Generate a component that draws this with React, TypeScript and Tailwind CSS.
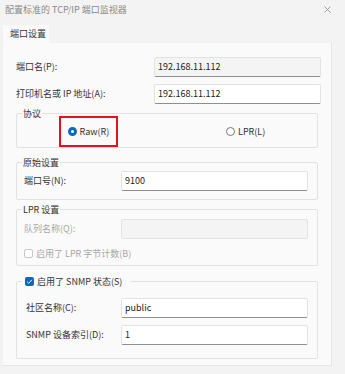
import { ReactNode } from "react";

const font = "font-['Noto_Sans_CJK_SC','Noto_Sans',sans-serif]";

// text box in Windows 11 style: light frame, darker bottom line
const Field = ({ value, w, disabled, dim }: { value: string; w: string; disabled?: boolean; dim?: boolean }) => (
  <div
    className={`${w} h-[20px] flex items-center pl-[3px] rounded-[2px] border border-[#e3e3e3] text-[9px] text-[#222] ${
      disabled ? "bg-[#f4f4f4]" : "bg-white"
    } ${dim ? "" : "border-b-[#8f8f8f]"}`}
  >
    {value}
  </div>
);

const Group = ({ legend, children, className }: { legend: ReactNode; children: ReactNode; className: string }) => (
  <div className={`relative mx-[13px] border border-[#e2e2e2] rounded-[2px] ${className}`}>
    <div className="absolute -top-[7px] left-[5px] px-[1px] bg-[#fafafa] h-[13px] flex items-center">{legend}</div>
    {children}
  </div>
);

const Check = ({ checked, disabled }: { checked?: boolean; disabled?: boolean }) =>
  checked ? (
    <span className="w-[9px] h-[9px] rounded-[2px] bg-[#0a67c2] flex items-center justify-center">
      <svg width="7" height="7" viewBox="0 0 8 8">
        <path d="M1.3 4.2 3.2 6 6.8 2" stroke="white" strokeWidth="1.1" fill="none" />
      </svg>
    </span>
  ) : (
    <span className={`w-[9px] h-[9px] rounded-[2px] border ${disabled ? "border-[#c8c8c8]" : "border-[#888]"} bg-white`} />
  );

export default function App() {
  return (
    <div className={`w-[345px] h-[374px] bg-[#f3f3f3] overflow-hidden ${font} text-[#333] text-[9px]`}>
      {/* title bar */}
      <div className="h-[19px] flex items-center justify-between pl-[5px] pr-[14px] text-[#8a8a8a]">
        <span>配置标准的 TCP/IP 端口监视器</span>
        <svg width="7" height="7" viewBox="0 0 7 7">
          <path d="M0.5 0.5 6.5 6.5 M6.5 0.5 0.5 6.5" stroke="#8a8a8a" strokeWidth="0.8" />
        </svg>
      </div>

      {/* tab */}
      <div className="mt-[6px] ml-[3px] w-[46px] h-[18px] bg-[#fafafa] flex items-center pl-[7px] text-[#333]">端口设置</div>

      {/* tab panel */}
      <div className="ml-[3px] w-[329px] h-[323px] bg-[#fafafa] border-r border-b border-[#e6e6e6] pt-[14px]">
        <div className="flex items-center pl-[13px]">
          <span className="w-[138px]">端口名(P):</span>
          <Field value="192.168.11.112" w="w-[167px]" disabled />
        </div>
        <div className="flex items-center pl-[13px] mt-[7px]">
          <span className="w-[138px]">打印机名或 IP 地址(A):</span>
          <Field value="192.168.11.112" w="w-[167px]" />
        </div>

        <Group legend={<span>协议</span>} className="mt-[9px] h-[35px]">
          <div className="flex items-start pl-[42px] pt-[2px]">
            <div className="w-[59px] h-[31px] border-2 border-[#e8101a] flex items-center justify-center gap-[3px]">
              <span className="w-[9px] h-[9px] rounded-full border-[3px] border-[#0a67c2] bg-white" />
              <span>Raw(R)</span>
            </div>
            <div className="ml-[108px] h-[31px] flex items-center gap-[3px]">
              <span className="w-[9px] h-[9px] rounded-full border border-[#777] bg-white" />
              <span>LPR(L)</span>
            </div>
          </div>
        </Group>

        <Group legend={<span>原始设置</span>} className="mt-[14px] h-[38px] pt-[8px]">
          <div className="flex items-center pl-[7px]">
            <span className="w-[97px]">端口号(N):</span>
            <Field value="9100" w="w-[187px]" />
          </div>
        </Group>

        <Group legend={<span>LPR 设置</span>} className="mt-[9px] h-[57px] pt-[9px]">
          <div className="flex items-center pl-[7px] text-[#a8a8a8]">
            <span className="w-[97px]">队列名称(Q):</span>
            <Field value="" w="w-[187px]" disabled dim />
          </div>
          <div className="flex items-center gap-[3px] pl-[7px] mt-[8px] text-[#a8a8a8]">
            <Check disabled />
            <span>启用了 LPR 字节计数(B)</span>
          </div>
        </Group>

        <Group
          legend={
            <span className="flex items-center gap-[3px] pl-[2px] pr-[7px]">
              <Check checked />
              <span>启用了 SNMP 状态(S)</span>
            </span>
          }
          className="mt-[15px] h-[78px] pt-[16px]"
        >
          <div className="flex items-center pl-[9px]">
            <span className="w-[95px]">社区名称(C):</span>
            <Field value="public" w="w-[187px]" />
          </div>
          <div className="flex items-center pl-[9px] mt-[7px]">
            <span className="w-[95px]">SNMP 设备索引(D):</span>
            <Field value="1" w="w-[187px]" />
          </div>
        </Group>
      </div>
    </div>
  );
}
